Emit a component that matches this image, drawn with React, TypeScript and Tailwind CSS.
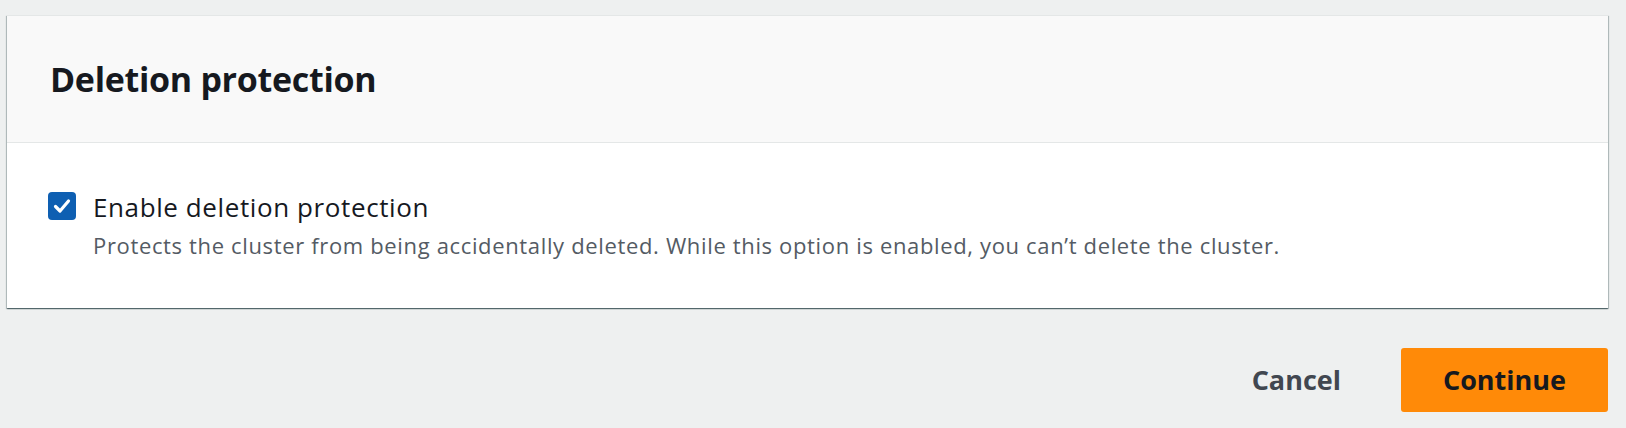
import React from 'react';

export default function App() {
  return (
    <div className="min-h-[428px] w-full bg-[#eef0f0] pl-[7px] pr-[18px] pt-[15px] font-['Open_Sans',sans-serif]">
      {/* Card */}
      <div className="bg-white border-t border-[#e4e7e7] shadow-[0_1px_1px_0_rgba(0,28,36,0.45),1px_1px_1px_0_rgba(0,28,36,0.2),-1px_1px_1px_0_rgba(0,28,36,0.2)]">
        <div className="flex h-[127px] items-center border-b border-[#e4e7e7] bg-[#f9f9f9] pl-[43px] pb-[1px]">
          <h2 className="text-[34px] font-bold leading-none tracking-[-0.3px] text-[#16191f]">Deletion protection</h2>
        </div>
        <div className="flex h-[165px] items-start gap-[17px] pl-[41px] pt-[49px]">
          <div className="flex h-[28px] w-[28px] shrink-0 items-center justify-center rounded-[4px] bg-[#0e5fb2]">
            <svg width="20" height="20" viewBox="0 0 20 20" fill="none">
              <path d="M3.5 10.5 L8 15 L16.5 5" stroke="white" strokeWidth="3.2" strokeLinecap="round" strokeLinejoin="round" />
            </svg>
          </div>
          <div className="flex flex-col">
            <span className="text-[26px] leading-[30px] tracking-[0.6px] text-[#16191f]">Enable deletion protection</span>
            <span className="mt-[9px] text-[22px] leading-[28px] tracking-[0.65px] text-[#545b64]">
              Protects the cluster from being accidentally deleted. While this option is enabled, you can’t delete the cluster.
            </span>
          </div>
        </div>
      </div>
      {/* Actions */}
      <div className="mt-[40px] flex items-center justify-end gap-[32px]">
        <button className="h-[64px] px-[28px] text-[27px] font-bold text-[#414750]">Cancel</button>
        <button className="h-[64px] w-[207px] rounded-[3px] bg-[#ff8a08] text-[27px] font-bold text-[#16191f]">Continue</button>
      </div>
    </div>
  );
}
